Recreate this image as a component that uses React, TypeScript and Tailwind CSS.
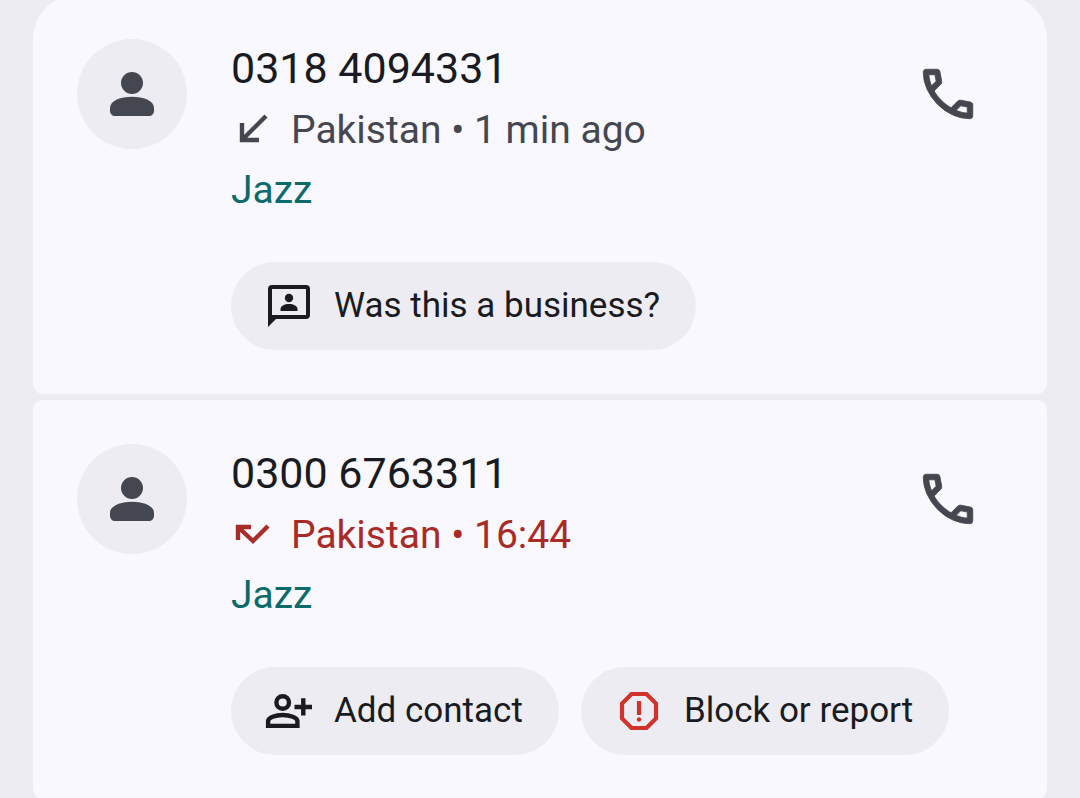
import type { ReactNode } from "react";

const IncomingIcon = () => (
  <svg viewBox="0 0 44 44" className="size-11" fill="none" stroke="currentColor" strokeWidth="4.400" aria-hidden="true">
    <path d="M11 15V32H28M11 32L35 8" />
  </svg>
);

const MissedIcon = () => (
  <svg viewBox="0 0 44 44" className="size-11" fill="none" stroke="currentColor" strokeWidth="4.400" aria-hidden="true">
    <path d="M20 14H7V27M7 14L22 28L37 13" />
  </svg>
);

const PersonIcon = () => (
  <svg viewBox="0 0 44 44" className="size-11" fill="currentColor" aria-hidden="true">
    <circle cx="22" cy="11" r="11" />
    <path d="M0 36C0 28.500 11 24.700 22 24.700S44 28.500 44 36V38.500C44 42 42 44 38.500 44H5.500C2 44 0 42 0 38.500Z" />
  </svg>
);

const PhoneIcon = () => (
  <svg viewBox="0 0 24 24" className="size-[66px]" fill="currentColor" stroke="currentColor" strokeWidth="0.300" aria-hidden="true">
    <path d="M19.95 21q-3.125 0-6.175-1.363-3.05-1.362-5.55-3.862t-3.863-5.55Q3 7.175 3 4.05q0-.45.3-.75t.75-.3H8.1q.35 0 .625.238.275.237.325.562l.65 3.5q.05.4-.025.675-.075.275-.275.475L6.975 10.9q.5.925 1.187 1.787.688.863 1.513 1.663.775.775 1.625 1.438.85.662 1.8 1.212l2.35-2.35q.225-.225.588-.338.362-.112.712-.062l3.45.7q.35.1.575.363.225.262.225.587v4.05q0 .45-.3.75t-.75.3ZM6.025 9l1.65-1.65L7.25 5H5.025q.125 1.025.35 2.025Q5.6 8.025 6.025 9Zm8.95 8.95q.975.425 1.988.675 1.012.25 2.037.325v-2.2l-2.35-.475Z" />
  </svg>
);

const BusinessIcon = () => (
  <svg viewBox="0 0 50 50" className="size-[50px]" fill="currentColor" aria-hidden="true">
    <path
      fillRule="evenodd"
      d="M8 4H42Q46 4 46 8V34Q46 38 42 38H12L4 46V8Q4 4 8 4ZM8 8V34H42V8Z"
    />
    <circle cx="25" cy="17" r="4.200" />
    <path d="M16.500 30V28C16.500 25 20.500 23 25 23S33.500 25 33.500 28V30Z" />
  </svg>
);

const AddContactIcon = () => (
  <svg viewBox="0 0 50 50" className="size-[50px]" fill="none" stroke="currentColor" strokeWidth="4.400" aria-hidden="true">
    <circle cx="18.700" cy="16.500" r="6.300" />
    <path d="M4.100 39.900V35C4.100 31.500 11.500 29 18.700 29S33.400 31.500 33.400 35V39.900Z" />
    <path d="M30.500 21H48M39.300 12.300V29.500" />
  </svg>
);

const ReportIcon = () => (
  <svg viewBox="0 0 50 50" className="size-[50px] text-[#d13229]" fill="none" stroke="currentColor" strokeWidth="4.200" aria-hidden="true">
    <path d="M17.500 8H32.500L42 17.500V32.500L32.500 42H17.500L8 32.500V17.500Z" />
    <path d="M25 15V29" />
    <circle cx="25" cy="33.500" r="2.200" fill="currentColor" stroke="none" />
  </svg>
);

interface ChipProps {
  icon: ReactNode;
  text: string;
}

const Chip = ({ icon, text }: ChipProps) => (
  <button
    type="button"
    className="flex h-[88px] cursor-pointer items-center gap-5 rounded-full bg-[#edecf2] pr-9 pl-[33px] text-[35px] whitespace-nowrap text-[#1a1b21]"
  >
    {icon}
    <span>{text}</span>
  </button>
);

interface CallProps {
  number: string;
  place: string;
  time: string;
  carrier: string;
  missed?: boolean;
  children: ReactNode;
}

const CallCard = ({ number, place, time, carrier, missed, children }: CallProps) => (
  <li className="flex gap-11 rounded-[10px] bg-[#f9f8ff] p-11 first:rounded-t-[44px]">
    <div className="flex size-[110px] shrink-0 items-center justify-center rounded-full bg-[#edecf2] text-[#454750]">
      <PersonIcon />
    </div>
    <div className="min-w-0 flex-1">
      <div className="flex justify-between">
        <div>
          <h2 className="text-[43px] leading-[58px] text-[#1a1b21]">{number}</h2>
          <p
            className={
              missed
                ? "flex items-center gap-4 text-[39px] leading-[66px] text-[#a92b26]"
                : "flex items-center gap-4 text-[39px] leading-[66px] text-[#454750]"
            }
          >
            {missed ? <MissedIcon /> : <IncomingIcon />}
            <span>
              {place} • {time}
            </span>
          </p>
          <p className="text-[39px] leading-[54px] text-[#0b6b6b]">{carrier}</p>
        </div>
        <button
          type="button"
          aria-label={`Call ${number}`}
          className="mr-[22px] flex h-[110px] cursor-pointer items-center text-[#454750]"
        >
          <PhoneIcon />
        </button>
      </div>
      <div className="mt-[45px] flex gap-[22px]">{children}</div>
    </div>
  </li>
);

export default function App() {
  return (
    <main className="h-screen overflow-hidden bg-[#edecf2] px-[33px] font-['Roboto',sans-serif]">
      <ul className="-mt-[5px] flex flex-col gap-[6px]">
        <CallCard number="0318 4094331" place="Pakistan" time="1 min ago" carrier="Jazz">
          <Chip icon={<BusinessIcon />} text="Was this a business?" />
        </CallCard>
        <CallCard number="0300 6763311" place="Pakistan" time="16:44" carrier="Jazz" missed>
          <Chip icon={<AddContactIcon />} text="Add contact" />
          <Chip icon={<ReportIcon />} text="Block or report" />
        </CallCard>
      </ul>
    </main>
  );
}
